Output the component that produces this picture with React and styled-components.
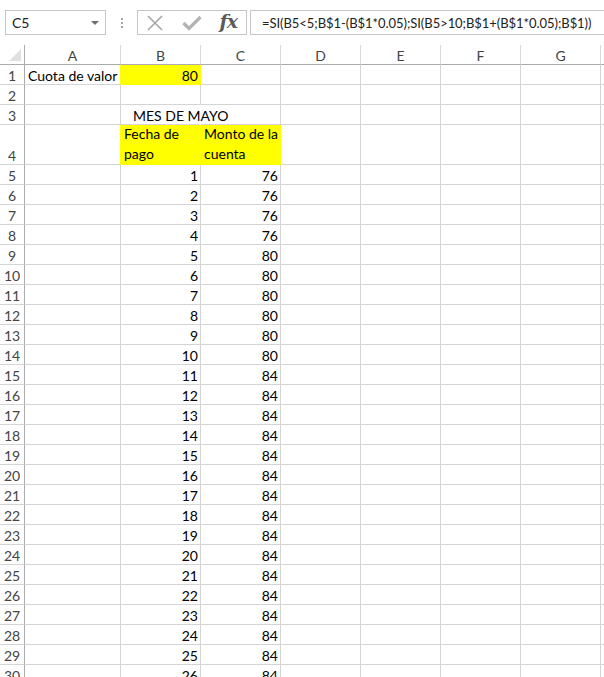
import React from "react";
import styled, { createGlobalStyle } from "styled-components";

const Global = createGlobalStyle`
  html, body { margin: 0; padding: 0; background: #fff; }
  body { font-family: "Lato", "Liberation Sans", sans-serif; overflow: hidden; }
`;

const FONT = `"Lato", "Liberation Sans", sans-serif`;

const Page = styled.div`
  width: 604px;
  height: 677px;
  overflow: hidden;
  background: #fff;
`;

const FormulaBar = styled.div`
  height: 45px;
  display: flex;
  align-items: flex-start;
  padding-top: 10px;
  padding-left: 5px;
  box-sizing: border-box;
`;

const NameBox = styled.div`
  width: 101px;
  height: 25px;
  box-sizing: border-box;
  border: 1px solid #c6c6c6;
  display: flex;
  align-items: center;
  justify-content: space-between;
  padding: 0 6px 0 6px;
  font-family: ${FONT};
  font-size: 14px;
  color: #222;
`;

const DropArrow = styled.span`
  width: 0;
  height: 0;
  border-left: 4px solid transparent;
  border-right: 4px solid transparent;
  border-top: 4px solid #6d6d6d;
`;

const Dots = styled.div`
  width: 31px;
  height: 25px;
  display: flex;
  flex-direction: column;
  align-items: center;
  justify-content: center;
  gap: 2px;
  & > span {
    width: 2px;
    height: 2px;
    background: #a6a6a6;
  }
`;

const IconBox = styled.div`
  width: 110px;
  height: 25px;
  box-sizing: border-box;
  border: 1px solid #c6c6c6;
  display: flex;
  align-items: center;
  justify-content: space-between;
  padding: 0 9px 0 8px;
`;

const Fx = styled.span`
  font-family: "DejaVu Serif", "Liberation Serif", serif;
  font-style: italic;
  font-weight: bold;
  font-size: 19px;
  color: #5a5a5a;
  letter-spacing: -1px;
  line-height: 1;
  margin-top: -3px;
`;

const FormulaInput = styled.div`
  flex: 1;
  margin-left: 3px;
  height: 25px;
  box-sizing: border-box;
  border: 1px solid #c6c6c6;
  border-right: none;
  display: flex;
  align-items: center;
  padding-left: 11px;
  font-family: ${FONT};
  font-size: 13px;
  letter-spacing: -0.05px;
  color: #222;
  white-space: nowrap;
  overflow: hidden;
`;

const Sheet = styled.div`
  display: grid;
  grid-template-columns: 25px 96px repeat(7, 80px);
  grid-auto-rows: 20px;
  font-family: ${FONT};
  font-size: 14px;
`;

const Corner = styled.div`
  box-sizing: border-box;
  border-right: 1px solid #ababab;
  border-bottom: 1px solid #ababab;
  display: flex;
  align-items: flex-end;
  justify-content: flex-end;
  padding: 0 3px 3px 0;
`;

const ColHeader = styled.div`
  box-sizing: border-box;
  border-right: 1px solid #dadada;
  border-bottom: 1px solid #ababab;
  display: flex;
  align-items: center;
  justify-content: center;
  color: #444;
  font-size: 14px;
  padding-top: 1px;
`;

const RowHeader = styled.div`
  box-sizing: border-box;
  border-right: 1px solid #ababab;
  border-bottom: 1px solid #d4d4d4;
  display: flex;
  align-items: flex-end;
  justify-content: center;
  color: #444;
  line-height: 17px;
  grid-row: span ${(p) => p.$span || 1};
`;

const Cell = styled.div`
  box-sizing: border-box;
  border-right: 1px solid ${(p) => p.$rightColor || p.$fill || "#d4d4d4"};
  border-bottom: 1px solid ${(p) => p.$fill || "#d4d4d4"};
  ${(p) => p.$noRight && "border-right-color: transparent;"}
  background: ${(p) => p.$fill || "transparent"};
  display: flex;
  flex-direction: column;
  justify-content: flex-end;
  align-items: ${(p) => (p.$right ? "flex-end" : "flex-start")};
  padding: 0 2px 0 ${(p) => p.$indent || 3}px;
  color: #000;
  line-height: ${(p) => (p.$lines ? "20px" : "17px")};
  white-space: nowrap;
  overflow: visible;
  grid-row: span ${(p) => p.$span || 1};
`;

const YELLOW = "#ffff00";
const COLS = ["A", "B", "C", "D", "E", "F", "G", ""];

function Empty({ n, span }) {
  return Array.from({ length: n }, (_, i) => <Cell key={i} $span={span} />);
}

export default function App() {
  const dataRows = [];
  for (let r = 5; r <= 30; r++) {
    const b = r - 4;
    const c = b < 5 ? 76 : b > 10 ? 84 : 80;
    dataRows.push(
      <React.Fragment key={r}>
        <RowHeader>{r}</RowHeader>
        <Cell />
        <Cell $right>{b}</Cell>
        <Cell $right>{c}</Cell>
        <Empty n={5} />
      </React.Fragment>
    );
  }

  return (
    <Page>
      <Global />
      <FormulaBar>
        <NameBox>
          C5
          <DropArrow />
        </NameBox>
        <Dots>
          <span />
          <span />
          <span />
        </Dots>
        <IconBox>
          <svg width="18" height="18" viewBox="0 0 18 18">
            <path d="M2 2 L16 16 M16 2 L2 16" stroke="#a6a6a6" strokeWidth="1.6" fill="none" />
          </svg>
          <svg width="20" height="17" viewBox="0 0 20 17">
            <path d="M1.5 9 L7 14.5 L18.5 3" stroke="#b3b3b3" strokeWidth="3.2" fill="none" />
          </svg>
          <Fx>fx</Fx>
        </IconBox>
        <FormulaInput>=SI(B5&lt;5;B$1-(B$1*0.05);SI(B5&gt;10;B$1+(B$1*0.05);B$1))</FormulaInput>
      </FormulaBar>
      <Sheet>
        <Corner>
          <svg width="12" height="12" viewBox="0 0 12 12">
            <polygon points="12,0 12,12 0,12" fill="#dfdfdf" />
          </svg>
        </Corner>
        {COLS.map((c, i) => (
          <ColHeader key={i}>{c}</ColHeader>
        ))}

        <RowHeader>1</RowHeader>
        <Cell $rightColor={YELLOW}>Cuota de valor</Cell>
        <Cell $fill={YELLOW} $right>80</Cell>
        <Empty n={6} />

        <RowHeader>2</RowHeader>
        <Empty n={8} />

        <RowHeader>3</RowHeader>
        <Cell />
        <Cell $noRight $indent={12}>MES DE MAYO</Cell>
        <Empty n={6} />

        <RowHeader $span={2}>4</RowHeader>
        <Cell $span={2} $rightColor={YELLOW} />
        <Cell $span={2} $fill={YELLOW} $lines>
          <span>Fecha de</span>
          <span>pago</span>
        </Cell>
        <Cell $span={2} $fill={YELLOW} $lines>
          <span>Monto de la</span>
          <span>cuenta</span>
        </Cell>
        <Empty n={5} span={2} />

        {dataRows}
      </Sheet>
    </Page>
  );
}
